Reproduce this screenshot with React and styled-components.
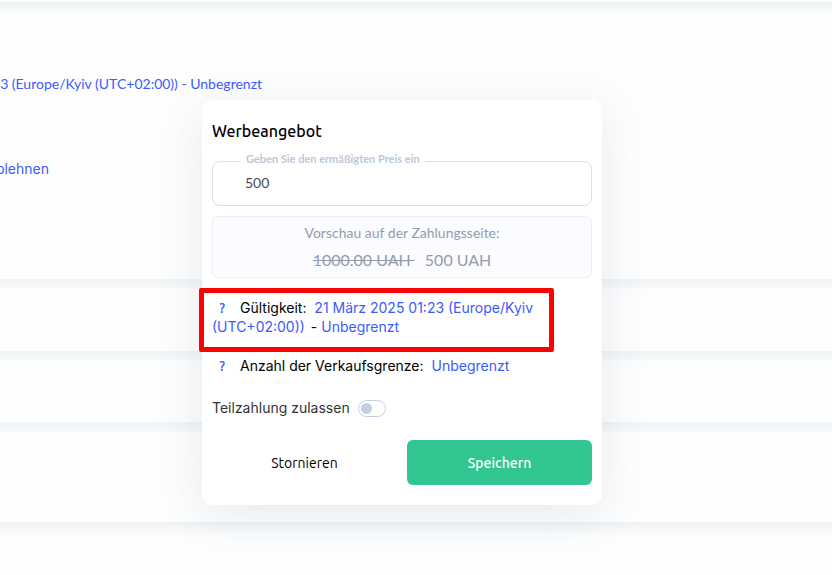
import React, { useState } from "react";
import styled, { createGlobalStyle } from "styled-components";

const GlobalStyle = createGlobalStyle`
  * {
    box-sizing: border-box;
  }
  body {
    margin: 0;
    background-color: #fefefe;
    font-family: Inter, sans-serif;
    font-size: 14px;
    color: #000;
  }
`;

export const Page = styled.main`
  position: relative;
  min-height: 100vh;
  overflow: hidden;
  display: flex;
  flex-direction: column;
  gap: 10px;
`;
export const Section = styled.section`
  min-height: ${(props) => props.$minHeight || "62px"};
  margin: ${(props) => props.$margin || "0 -20px"};
  padding: ${(props) => props.$padding || "0"};
  background-color: #fefefe;
  box-shadow: 0 4px 14px #e7eef3;
  clip-path: inset(0 0 -30px 0);
  display: flex;
  flex-direction: column;
  align-items: flex-start;
  gap: 65px;
`;
export const PageLink = styled.a`
  font-family: ${(props) => props.$fontFamily || "Inter, sans-serif"};
  font-size: 14px;
  line-height: 20px;
  color: #3b5bfe;
  text-decoration: none;
  white-space: nowrap;
`;
export const Clip = styled.div`
  width: ${(props) => props.$width};
  overflow: hidden;
  display: flex;
  justify-content: flex-end;
`;
export const Overlay = styled.div`
  position: absolute;
  inset: 0;
  padding: 100px 28px 0 0;
  display: flex;
  justify-content: center;
  align-items: flex-start;
`;
export const Modal = styled.form`
  width: 400px;
  padding: 20px 10px;
  border-radius: 10px;
  background-color: #fff;
  box-shadow: 0 10px 50px rgba(49, 79, 124, 0.12);
`;
export const Title = styled.h2`
  margin: 0 0 10px;
  font-family: Ubuntu, "Noto Sans", sans-serif;
  font-size: 16px;
  font-weight: 500;
  line-height: 22px;
`;
export const PriceField = styled.fieldset`
  min-width: 0;
  margin: 0;
  padding: 0 10px;
  border: 1px solid #dcdfeb;
  border-radius: 8px;
`;
export const Legend = styled.legend`
  margin-left: 18px;
  padding: 0 5px 4px;
  font-family: Lato, sans-serif;
  font-size: 11px;
  font-weight: 700;
  line-height: 14px;
  color: #bcc8da;
`;
export const PriceInput = styled.input`
  display: block;
  width: 100%;
  height: 35px;
  padding: 0 22px 10px;
  border: 0;
  outline: 0;
  background: transparent;
  font-family: Lato, sans-serif;
  font-size: 14px;
  color: #4b4b4b;
`;
export const Preview = styled.div`
  height: 62px;
  margin: 10px 0 20px;
  padding: 2px 0;
  border: 1px solid #ebeff6;
  border-radius: 6px;
  background-color: #fafcff;
  text-align: center;
  font-family: Lato, sans-serif;
  line-height: 27px;
  color: #969bab;
`;
export const Prices = styled.div`
  display: flex;
  justify-content: center;
  gap: 10px;
  font-size: 16px;
  white-space: pre;
`;
export const Option = styled.div`
  position: relative;
  margin-bottom: 20px;
  line-height: 19px;
`;
export const FramedOption = styled(Option)`
  &::after {
    content: "";
    position: absolute;
    inset: -10px 38px -16px -13px;
    border: 5px solid #f00;
    border-radius: 2px;
    pointer-events: none;
  }
`;
export const Help = styled.button`
  width: 20px;
  margin-right: 8px;
  padding: 0;
  border: 0;
  background: none;
  font-family: Ubuntu, "Noto Sans", sans-serif;
  font-size: 14px;
  font-weight: 500;
  line-height: 18px;
  color: #3b5bfe;
`;
export const OptionLink = styled.a`
  margin: ${(props) => props.$margin || "0 0 0 4px"};
  color: #3b5bfe;
  text-decoration: none;
`;
export const SwitchLabel = styled.label`
  margin-top: 23px;
  display: flex;
  align-items: center;
  gap: 8px;
  line-height: 20px;
  color: #333;
`;
export const Switch = styled.input`
  appearance: none;
  width: 28px;
  height: 17px;
  margin: 0;
  padding: 2px;
  border: 1px solid #c3cfe2;
  border-radius: 9px;
  display: flex;
  align-items: center;

  &::before {
    content: "";
    width: 11px;
    height: 11px;
    border-radius: 50%;
    background-color: #c3cfe2;
  }
  &:checked {
    justify-content: flex-end;
  }
`;
export const Actions = styled.div`
  margin-top: 22px;
  display: grid;
  grid-template-columns: 1fr 1fr;
  gap: 10px;
`;
export const ActionButton = styled.button`
  height: 45px;
  padding: 0;
  border: 0;
  border-radius: 6px;
  background-color: ${(props) => props.$background || "transparent"};
  font-family: Ubuntu, "Noto Sans", sans-serif;
  font-size: 14px;
  font-weight: ${(props) => props.$weight || "400"};
  color: ${(props) => props.$color || "#000"};
`;

function App() {
  const [price, setPrice] = useState("500");
  const [partial, setPartial] = useState(false);

  return (
    <Page>
      <GlobalStyle />
      <Section $minHeight="42px" $margin="-40px -20px 0" />
      <Section $minHeight="267px" $padding="62px 20px 0">
        <Clip $width="262px">
          <PageLink href="#validity" $fontFamily="Lato, sans-serif">
            3 (Europe/Kyiv (UTC+02:00)) - Unbegrenzt
          </PageLink>
        </Clip>
        <Clip $width="49px">
          <PageLink href="#decline">blehnen</PageLink>
        </Clip>
      </Section>
      <Section />
      <Section $minHeight="61px" />
      <Section $minHeight="90px" />

      <Overlay>
        <Modal
          role="dialog"
          aria-labelledby="offer-title"
          onSubmit={(e) => e.preventDefault()}
        >
          <Title id="offer-title">Werbeangebot</Title>
          <PriceField>
            <Legend id="price-label">Geben Sie den ermäßigten Preis ein</Legend>
            <PriceInput
              aria-labelledby="price-label"
              value={price}
              onChange={(e) => setPrice(e.target.value)}
            />
          </PriceField>

          <Preview>
            <div>Vorschau auf der Zahlungsseite:</div>
            <Prices>
              <s>1000.00 UAH </s>
              <span>{price} UAH</span>
            </Prices>
          </Preview>

          <FramedOption>
            <Help type="button">?</Help>
            Gültigkeit:{" "}
            <OptionLink href="#period" $margin="0 2px 0 4px">
              21 März 2025 01:23 (Europe/Kyiv (UTC+02:00))
            </OptionLink>
            {" -"}
            <OptionLink href="#period-end">Unbegrenzt</OptionLink>
          </FramedOption>
          <Option>
            <Help type="button">?</Help>
            Anzahl der Verkaufsgrenze:{" "}
            <OptionLink href="#limit">Unbegrenzt</OptionLink>
          </Option>

          <SwitchLabel>
            Teilzahlung zulassen
            <Switch
              type="checkbox"
              role="switch"
              checked={partial}
              onChange={(e) => setPartial(e.target.checked)}
            />
          </SwitchLabel>

          <Actions>
            <ActionButton type="button">Stornieren</ActionButton>
            <ActionButton
              type="submit"
              $background="#31c690"
              $color="#fff"
              $weight="500"
            >
              Speichern
            </ActionButton>
          </Actions>
        </Modal>
      </Overlay>
    </Page>
  );
}

export default App;
